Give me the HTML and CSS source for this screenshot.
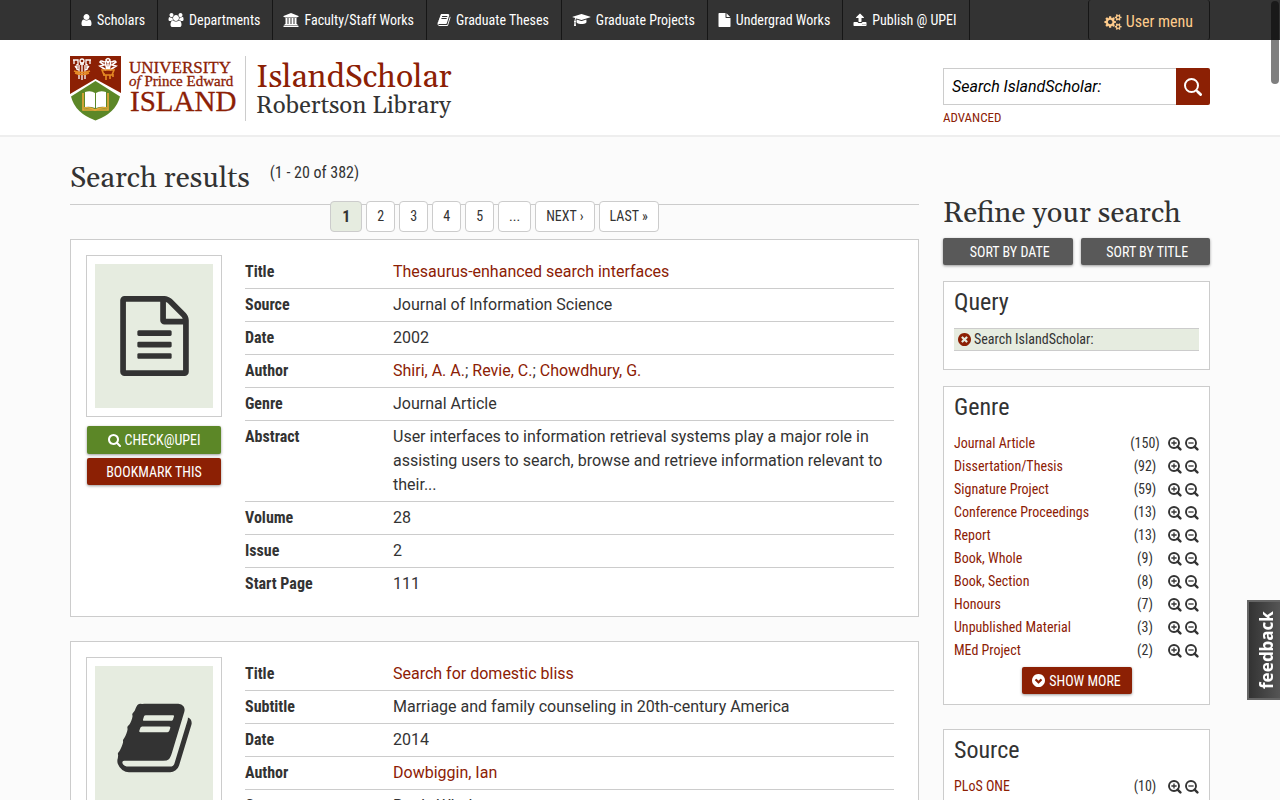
FILE: index.html
```html
<!DOCTYPE html>
<html lang="en">
<head>
<meta charset="utf-8">
<meta name="viewport" content="width=device-width, initial-scale=1">
<title>Search results | IslandScholar</title>
<link rel="stylesheet" href="styles.css">
</head>
<body>
<svg class="sprite" aria-hidden="true">
  <symbol id="i-user" viewBox="256 0 1280 1792"><path d="M1536 1399q0 109-62.5 187t-150.5 78h-854q-88 0-150.5-78t-62.5-187q0-85 8.5-160.5t31.5-152 58.5-131 94-89 134.5-34.5q131 128 313 128t313-128q76 0 134.5 34.5t94 89 58.5 131 31.5 152 8.5 160.5zm-256-887q0 159-112.5 271.5t-271.5 112.5-271.5-112.5-112.5-271.5 112.5-271.5 271.5-112.5 271.5 112.5 112.5 271.5z"/></symbol>
  <symbol id="i-users" viewBox="0 0 1920 1792"><path d="M593 896q-162 5-265 128h-134q-82 0-138-40.5t-56-118.5q0-353 124-353 6 0 43.5 21t97.5 42.5 119 21.5q67 0 133-23-5 37-5 66 0 159 93 287zm1071 637q0 120-73 189.5t-194 69.5h-874q-121 0-194-69.5t-73-189.5q0-53 3.5-103.5t14-109 26.5-108.5 43-97.5 62-81 85.5-53.5 111.5-20q10 0 43 21.5t73 48 107 48 135 21.5 135-21.5 107-48 73-48 43-21.5q61 0 111.5 20t85.5 53.5 62 81 43 97.5 26.5 108.5 14 109 3.5 103.5zm-1024-1277q0 106-75 181t-181 75-181-75-75-181 75-181 181-75 181 75 75 181zm704 384q0 159-112.5 271.5t-271.5 112.5-271.5-112.5-112.5-271.5 112.5-271.5 271.5-112.5 271.5 112.5 112.5 271.5zm576 225q0 78-56 118.5t-138 40.5h-134q-103-123-265-128 93-128 93-287 0-29-5-66 66 23 133 23 59 0 119-21.5t97.5-42.5 43.5-21q124 0 124 353zm-128-609q0 106-75 181t-181 75-181-75-75-181 75-181 181-75 181 75 75 181z"/></symbol>
  <symbol id="i-university" viewBox="0 0 1920 1792"><path d="M960 0l960 384v128h-128q0 26-20.5 45t-48.5 19h-1526q-28 0-48.5-19t-20.5-45h-128v-128zm-704 640h256v768h128v-768h256v768h128v-768h256v768h128v-768h256v768h59q28 0 48.5 19t20.5 45v64h-1664v-64q0-26 20.5-45t48.5-19h59v-768zm1595 960q28 0 48.5 19t20.5 45v128h-1920v-128q0-26 20.5-45t48.5-19h1782z"/></symbol>
  <symbol id="i-book" viewBox="64 0 1664 1792"><path d="M1703 478q40 57 18 129l-275 906q-19 64-76.5 107.5t-122.5 43.5h-923q-77 0-148.5-53.5t-99.5-131.5q-24-67-2-127 0-4 3-27t4-37q1-8-3-21.5t-3-19.5q2-11 8-21t16.5-23.5 16.5-23.5q23-38 45-91.5t30-91.5q3-10 .5-30t-.5-28q3-11 17-28t17-23q21-36 42-92t25-90q1-9-2.5-32t.5-28q4-13 22-30.5t22-22.5q19-26 42.5-84.5t27.5-96.5q1-8-3-25.5t-2-26.5q2-8 9-18t18-23 17-21q8-12 16.5-30.5t15-35 16-36 19.5-32 26.5-23.5 36-11.5 47.5 5.5l-1 3q38-9 51-9h761q74 0 114 56t18 130l-274 906q-36 119-71.5 153.5t-128.5 34.5h-869q-27 0-38 15-11 16-1 43 24 70 144 70h923q29 0 56-15.5t35-41.5l300-987q7-22 5-57 38 15 59 43zm-1064 2q-4 13 2 22.5t20 9.5h608q13 0 25.5-9.5t16.5-22.5l21-64q4-13-2-22.5t-20-9.5h-608q-13 0-25.5 9.5t-16.5 22.5zm-83 256q-4 13 2 22.5t20 9.5h608q13 0 25.5-9.5t16.5-22.5l21-64q4-13-2-22.5t-20-9.5h-608q-13 0-25.5 9.5t-16.5 22.5z"/></symbol>
  <symbol id="i-cap" viewBox="0 0 2304 1792"><path d="M1774 836l18 316q4 69-82 128t-235 93.5-323 34.5-323-34.5-235-93.5-82-128l18-316 574 181q22 7 48 7t48-7zm530-324q0 23-22 31l-1120 352q-4 1-10 1t-10-1l-652-206q-43 34-71 111.5t-34 178.5q63 36 63 109 0 69-58 107l58 433q2 14-8 25-9 11-24 11h-192q-15 0-24-11-10-11-8-25l58-433q-58-38-58-107 0-73 65-111 11-207 98-330l-333-104q-22-8-22-31t22-31l1120-352q4-1 10-1t10 1l1120 352q22 8 22 31z"/></symbol>
  <symbol id="i-file" viewBox="128 0 1536 1792"><path d="M1152 512v-472q22 14 36 28l408 408q14 14 28 36h-472zm-128 32q0 40 28 68t68 28h544v1056q0 40-28 68t-68 28h-1344q-40 0-68-28t-28-68v-1600q0-40 28-68t68-28h800v544z"/></symbol>
  <symbol id="i-upload" viewBox="64 0 1664 1792"><path d="M1344 1472q0-26-19-45t-45-19-45 19-19 45 19 45 45 19 45-19 19-45zm256 0q0-26-19-45t-45-19-45 19-19 45 19 45 45 19 45-19 19-45zm128-224v320q0 40-28 68t-68 28h-1472q-40 0-68-28t-28-68v-320q0-40 28-68t68-28h427q21 56 70.5 92t110.5 36h256q61 0 110.5-36t70.5-92h427q40 0 68 28t28 68zm-325-648q-17 40-59 40h-256v448q0 26-19 45t-45 19h-256q-26 0-45-19t-19-45v-448h-256q-42 0-59-40-17-39 14-69l448-448q18-19 45-19t45 19l448 448q31 30 14 69z"/></symbol>
  <symbol id="i-cogs" viewBox="0 0 1920 1792"><path d="M896 896q0-106-75-181t-181-75-181 75-75 181 75 181 181 75 181-75 75-181zm768 512q0-52-38-90t-90-38-90 38-38 90q0 53 37.5 90.5t90.5 37.5 90.5-37.5 37.5-90.5zm0-1024q0-52-38-90t-90-38-90 38-38 90q0 53 37.5 90.5t90.5 37.5 90.5-37.5 37.5-90.5zm-384 421v185q0 10-7 19.5t-16 10.5l-155 24q-11 35-32 76 34 48 90 115 7 11 7 20 0 12-7 19-23 30-82.5 89.5t-78.5 59.5q-11 0-21-7l-115-90q-37 19-77 31-11 108-23 155-7 24-30 24h-186q-11 0-20-7.5t-10-17.5l-23-153q-34-10-75-31l-118 89q-7 7-20 7-11 0-21-8-144-133-144-160 0-9 7-19 10-14 41-53t47-61q-23-44-35-82l-152-24q-10-1-17-9.5t-7-19.5v-185q0-10 7-19.5t16-10.5l155-24q11-35 32-76-34-48-90-115-7-11-7-20 0-12 7-20 22-30 82-89t79-59q11 0 21 7l115 90q34-18 77-32 11-108 23-154 7-24 30-24h186q11 0 20 7.5t10 17.5l23 153q34 10 75 31l118-89q8-7 20-7 11 0 21 8 144 133 144 160 0 9-7 19-12 16-42 54t-45 60q23 48 34 82l152 23q10 2 17 10.5t7 19.5zm640 533v140q0 16-149 31-12 27-30 52 51 113 51 138 0 4-4 7-122 71-124 71-8 0-46-47t-52-68q-20 2-30 2t-30-2q-14 21-52 68t-46 47q-2 0-124-71-4-3-4-7 0-25 51-138-18-25-30-52-149-15-149-31v-140q0-16 149-31 13-29 30-52-51-113-51-138 0-4 4-7 4-2 35-20t59-34 30-16q8 0 46 46.5t52 67.5q20-2 30-2t30 2q51-71 92-112l6-2q4 0 124 70 4 3 4 7 0 25-51 138 17 23 30 52 149 15 149 31zm0-1024v140q0 16-149 31-12 27-30 52 51 113 51 138 0 4-4 7-122 71-124 71-8 0-46-47t-52-68q-20 2-30 2t-30-2q-14 21-52 68t-46 47q-2 0-124-71-4-3-4-7 0-25 51-138-18-25-30-52-149-15-149-31v-140q0-16 149-31 13-29 30-52-51-113-51-138 0-4 4-7 4-2 35-20t59-34 30-16q8 0 46 46.5t52 67.5q20-2 30-2t30 2q51-71 92-112l6-2q4 0 124 70 4 3 4 7 0 25-51 138 17 23 30 52 149 15 149 31z"/></symbol>
  <symbol id="i-search" viewBox="64 128 1664 1664"><path d="M1216 832q0-185-131.5-316.5t-316.5-131.5-316.5 131.5-131.5 316.5 131.5 316.5 316.5 131.5 316.5-131.5 131.5-316.5zm512 832q0 52-38 90t-90 38q-54 0-90-38l-343-342q-179 124-399 124-143 0-273.5-55.5t-225-150-150-225-55.5-273.5 55.5-273.5 150-225 225-150 273.5-55.5 273.5 55.5 225 150 150 225 55.5 273.5q0 220-124 399l343 343q37 37 37 90z"/></symbol>
  <symbol id="i-glass" viewBox="0 0 18 18"><g fill="none" stroke="currentColor" stroke-linecap="round"><circle cx="7.500" cy="7.500" r="6.500" stroke-width="2"/><path d="M12.500 12.500l.8.800" stroke-width="2"/><path d="M14 14l2.600 2.600" stroke-width="2.800"/></g></symbol>
  <symbol id="i-plus" viewBox="0 0 14 14"><g fill="none" stroke="currentColor"><circle cx="6" cy="6" r="5" stroke-width="1.9"/><path d="M9.6 9.6l2.8 2.8" stroke-width="2.4" stroke-linecap="round"/><path d="M3.4 6h5.2M6 3.4v5.2" stroke-width="1.3"/></g></symbol>
  <symbol id="i-minus" viewBox="0 0 14 14"><g fill="none" stroke="currentColor"><circle cx="6" cy="6" r="5" stroke-width="1.9"/><path d="M9.6 9.6l2.8 2.8" stroke-width="2.4" stroke-linecap="round"/><path d="M3.4 6h5.2" stroke-width="1.3"/></g></symbol>
  <symbol id="i-times" viewBox="128 128 1536 1536"><path d="M1277 1122q0-26-19-45l-181-181 181-181q19-19 19-45 0-27-19-46l-90-90q-19-19-46-19-26 0-45 19l-181 181-181-181q-19-19-45-19-27 0-46 19l-90 90q-19 19-19 46 0 26 19 45l181 181-181 181q-19 19-19 45 0 27 19 46l90 90q19 19 46 19 26 0 45-19l181-181 181 181q19 19 45 19 27 0 46-19l90-90q19-19 19-46zm387-226q0 209-103 385.5t-279.5 279.5-385.5 103-385.5-103-279.5-279.5-103-385.5 103-385.5 279.5-279.5 385.5-103 385.5 103 279.5 279.5 103 385.5z"/></symbol>
  <symbol id="i-down" viewBox="128 128 1536 1536"><path d="M941 1259l358-358q19-19 19-45t-19-45l-102-102q-19-19-45-19t-45 19l-211 211-211-211q-19-19-45-19t-45 19l-102 102q-19 19-19 45t19 45l358 358q19 19 45 19t45-19zm723-363q0 209-103 385.5t-279.5 279.5-385.5 103-385.5-103-279.5-279.5-103-385.5 103-385.5 279.5-279.5 385.5-103 385.5 103 279.5 279.5 103 385.5z"/></symbol>
  <symbol id="i-doc" viewBox="128 0 1536 1792"><path d="M1596 380q28 28 48 76t20 88v1152q0 40-28 68t-68 28h-1344q-40 0-68-28t-28-68v-1600q0-40 28-68t68-28h896q40 0 88 20t76 48zm-444-244v376h376q-10-29-22-41l-313-313q-12-12-41-22zm384 1528v-1024h-416q-40 0-68-28t-28-68v-416h-768v1536h1280zm-1024-864q0-14 9-23t23-9h704q14 0 23 9t9 23v64q0 14-9 23t-23 9h-704q-14 0-23-9t-9-23v-64zm736 224q14 0 23 9t9 23v64q0 14-9 23t-23 9h-704q-14 0-23-9t-9-23v-64q0-14 9-23t23-9h704zm0 256q14 0 23 9t9 23v64q0 14-9 23t-23 9h-704q-14 0-23-9t-9-23v-64q0-14 9-23t23-9h704z"/></symbol>
</svg>

<nav class="topbar">
  <div class="container topbar-row">
    <ul class="menu">
      <li><a href="#"><svg class="w11"><use href="#i-user"/></svg>Scholars</a></li>
      <li><a href="#"><svg class="w16"><use href="#i-users"/></svg>Departments</a></li>
      <li><a href="#"><svg class="w16"><use href="#i-university"/></svg>Faculty/Staff Works</a></li>
      <li><a href="#"><svg class="w14"><use href="#i-book"/></svg>Graduate Theses</a></li>
      <li><a href="#"><svg class="w19"><use href="#i-cap"/></svg>Graduate Projects</a></li>
      <li><a href="#"><svg class="w13"><use href="#i-file"/></svg>Undergrad Works</a></li>
      <li><a href="#"><svg class="w14"><use href="#i-upload"/></svg>Publish @ UPEI</a></li>
    </ul>
    <button class="user-menu" type="button"><svg><use href="#i-cogs"/></svg>User menu</button>
  </div>
</nav>

<header class="masthead">
  <div class="container masthead-row">
    <a class="brand" href="#">
      <svg class="logo" viewBox="0 0 166 65" role="img" aria-label="University of Prince Edward Island">
        <path d="M0 0h51v37L25.500 23 0 38z" fill="#8c2004"/>
        <path d="M1 40.500L25.500 25 50 40.500Q46 57 25.500 64.500 5 57 1 40.500z" fill="#5c8727"/>
        <g fill="none" stroke="#fff" stroke-width="1.300">
          <circle cx="12" cy="5" r="2"/><path d="M3 4h5v5M4 4v4M21 4h-5v5M20 4v4M7 8v6M17 8v6M10 8h4M12 7v17M9 9v14M15 9v14M5 10l3 4M19 10l-3 4"/>
          <path d="M38 14V5M36 4q2-3 4 0l-2 3zM34 6q-3-2-4 0l4 3-4 1 6 4M42 6q3-2 4 0l-4 3 4 1-6 4M35 5l2 9M41 5l-2 9" stroke-width="1.600"/>
        </g>
        <path d="M4 15q8 3 16 0M5 17q7 3 14 0M32 14h12l-2 5h-8zM36 19v5M40 19v4M34 17v3M43 18v3" fill="none" stroke="#e58a24" stroke-width="1.600"/>
        <path d="M13 37v17h25V37" fill="none" stroke="#e9a93a" stroke-width="1.600"/>
        <path d="M15 36q6-2 10 1v15q-5-2-10-1zM36 36q-6-2-10 1v15q5-2 10-1z" fill="#fff"/>
        <path d="M14 52q6-1 11 2 6-3 12-2" fill="none" stroke="#e9a93a" stroke-width="1.500"/>
        <g class="logo-text">
          <text x="59" y="17" font-size="17">UNIVERSITY</text>
          <text x="59" y="30" font-size="15"><tspan font-style="italic">of</tspan> Prince Edward</text>
          <text x="60" y="55" font-size="29">ISLAND</text>
        </g>
      </svg>
      <span class="site">
        <span class="site-name">IslandScholar</span>
        <span class="site-sub">Robertson Library</span>
      </span>
    </a>
    <form class="search">
      <div class="search-row">
        <input type="text" aria-label="Search" placeholder="Search IslandScholar:">
        <button type="button" aria-label="Search"><svg><use href="#i-glass"/></svg></button>
      </div>
      <a class="advanced" href="#">ADVANCED</a>
    </form>
  </div>
</header>

<div class="container page">
  <main>
    <div class="heading">
      <h1>Search results</h1>
      <span>(1 - 20 of 382)</span>
    </div>
    <ul class="pager">
      <li class="current">1</li>
      <li><a href="#">2</a></li>
      <li><a href="#">3</a></li>
      <li><a href="#">4</a></li>
      <li><a href="#">5</a></li>
      <li>...</li>
      <li><a href="#">NEXT ›</a></li>
      <li><a href="#">LAST »</a></li>
    </ul>

    <article class="result">
      <div class="side">
        <a class="thumb" href="#" aria-label="Journal Article"><span><svg class="doc"><use href="#i-doc"/></svg></span></a>
        <button class="btn green" type="button"><svg><use href="#i-search"/></svg>CHECK@UPEI</button>
        <button class="btn red" type="button">BOOKMARK THIS</button>
      </div>
      <dl>
        <div><dt>Title</dt><dd><a href="#">Thesaurus-enhanced search interfaces</a></dd></div>
        <div><dt>Source</dt><dd>Journal of Information Science</dd></div>
        <div><dt>Date</dt><dd>2002</dd></div>
        <div><dt>Author</dt><dd><a href="#">Shiri, A. A.</a>; <a href="#">Revie, C.</a>; <a href="#">Chowdhury, G.</a></dd></div>
        <div><dt>Genre</dt><dd>Journal Article</dd></div>
        <div><dt>Abstract</dt><dd>User interfaces to information retrieval systems play a major role in assisting users to search, browse and retrieve information relevant to their...</dd></div>
        <div><dt>Volume</dt><dd>28</dd></div>
        <div><dt>Issue</dt><dd>2</dd></div>
        <div><dt>Start Page</dt><dd>111</dd></div>
      </dl>
    </article>

    <article class="result">
      <div class="side">
        <a class="thumb" href="#" aria-label="Book, Whole"><span><svg class="book"><use href="#i-book"/></svg></span></a>
      </div>
      <dl>
        <div><dt>Title</dt><dd><a href="#">Search for domestic bliss</a></dd></div>
        <div><dt>Subtitle</dt><dd>Marriage and family counseling in 20th-century America</dd></div>
        <div><dt>Date</dt><dd>2014</dd></div>
        <div><dt>Author</dt><dd><a href="#">Dowbiggin, Ian</a></dd></div>
        <div><dt>Genre</dt><dd>Book, Whole</dd></div>
      </dl>
    </article>
  </main>

  <aside>
    <h2>Refine your search</h2>
    <div class="sorts">
      <button class="btn grey" type="button">SORT BY DATE</button>
      <button class="btn grey" type="button">SORT BY TITLE</button>
    </div>
    <section class="box query">
      <h3>Query</h3>
      <p><a href="#" aria-label="Remove"><svg><use href="#i-times"/></svg></a>Search IslandScholar:</p>
    </section>
    <section class="box">
      <h3>Genre</h3>
      <ul class="facets">
        <li><a href="#">Journal Article</a><span>(150)</span><button type="button" aria-label="Include"><svg><use href="#i-plus"/></svg></button><button type="button" aria-label="Exclude"><svg><use href="#i-minus"/></svg></button></li>
        <li><a href="#">Dissertation/Thesis</a><span>(92)</span><button type="button" aria-label="Include"><svg><use href="#i-plus"/></svg></button><button type="button" aria-label="Exclude"><svg><use href="#i-minus"/></svg></button></li>
        <li><a href="#">Signature Project</a><span>(59)</span><button type="button" aria-label="Include"><svg><use href="#i-plus"/></svg></button><button type="button" aria-label="Exclude"><svg><use href="#i-minus"/></svg></button></li>
        <li><a href="#">Conference Proceedings</a><span>(13)</span><button type="button" aria-label="Include"><svg><use href="#i-plus"/></svg></button><button type="button" aria-label="Exclude"><svg><use href="#i-minus"/></svg></button></li>
        <li><a href="#">Report</a><span>(13)</span><button type="button" aria-label="Include"><svg><use href="#i-plus"/></svg></button><button type="button" aria-label="Exclude"><svg><use href="#i-minus"/></svg></button></li>
        <li><a href="#">Book, Whole</a><span>(9)</span><button type="button" aria-label="Include"><svg><use href="#i-plus"/></svg></button><button type="button" aria-label="Exclude"><svg><use href="#i-minus"/></svg></button></li>
        <li><a href="#">Book, Section</a><span>(8)</span><button type="button" aria-label="Include"><svg><use href="#i-plus"/></svg></button><button type="button" aria-label="Exclude"><svg><use href="#i-minus"/></svg></button></li>
        <li><a href="#">Honours</a><span>(7)</span><button type="button" aria-label="Include"><svg><use href="#i-plus"/></svg></button><button type="button" aria-label="Exclude"><svg><use href="#i-minus"/></svg></button></li>
        <li><a href="#">Unpublished Material</a><span>(3)</span><button type="button" aria-label="Include"><svg><use href="#i-plus"/></svg></button><button type="button" aria-label="Exclude"><svg><use href="#i-minus"/></svg></button></li>
        <li><a href="#">MEd Project</a><span>(2)</span><button type="button" aria-label="Include"><svg><use href="#i-plus"/></svg></button><button type="button" aria-label="Exclude"><svg><use href="#i-minus"/></svg></button></li>
      </ul>
      <button class="btn red more" type="button"><svg><use href="#i-down"/></svg>SHOW MORE</button>
    </section>
    <section class="box">
      <h3>Source</h3>
      <ul class="facets">
        <li><a href="#">PLoS ONE</a><span>(10)</span><button type="button" aria-label="Include"><svg><use href="#i-plus"/></svg></button><button type="button" aria-label="Exclude"><svg><use href="#i-minus"/></svg></button></li>
      </ul>
    </section>
  </aside>
</div>

<button class="feedback" type="button">feedback</button>
<div class="scroll-thumb"></div>
</body>
</html>
```
FILE: styles.css
```css
* { box-sizing: border-box; }
html { scrollbar-width: none; }
body {
  margin: 0;
  background: #fbfbfb;
  color: #333;
  font: 16px/24px Roboto, sans-serif;
}
a { color: #8c2004; text-decoration: none; }
ul { list-style: none; margin: 0; padding: 0; }
h1, h2, h3, p, dl, dd { margin: 0; }
svg { fill: currentColor; flex: none; }
button { font: inherit; color: inherit; border: 0; padding: 0; background: none; cursor: pointer; }
.sprite { position: absolute; width: 0; height: 0; }
.container { max-width: 1140px; margin: 0 auto; }

.topbar { background: #333; }
.topbar-row { display: flex; justify-content: space-between; height: 40px; }
.menu { display: flex; border-left: 1px solid #161616; }
.menu li { border-right: 1px solid #161616; }
.menu a {
  display: flex;
  align-items: center;
  gap: 5px;
  height: 40px;
  padding: 0 12px 0 10px;
  color: #fff;
  font: 14px/20px "Roboto Condensed", Roboto, sans-serif;
  white-space: nowrap;
}
.menu svg { height: 14px; }
.w11 { width: 11px; }
.w13 { width: 13px; }
.w14 { width: 14px; }
.w16 { width: 16px; }
.w19 { width: 19px; }
.user-menu {
  display: flex;
  align-items: center;
  gap: 4px;
  padding: 4px 16px 0 15px;
  border: solid #161616;
  border-width: 0 1px;
  border-radius: 3px;
  color: #ffcc8c;
  font: 16px/20px "Roboto Condensed", Roboto, sans-serif;
}
.user-menu svg { width: 18px; height: 16px; }

.masthead { background: #fff; border-bottom: 2px solid #eee; }
.masthead-row { display: flex; justify-content: space-between; align-items: flex-start; padding: 16px 0 4px; }
.brand { display: flex; }
.logo { width: 166px; height: 65px; }
.logo-text { fill: #8c2004; stroke: #8c2004; stroke-width: .3; font-family: "Liberation Serif", serif; }
.site {
  display: flex;
  flex-direction: column;
  margin-left: 9px;
  padding: 6px 0 0 10px;
  border-left: 1px solid #ccc;
  font-family: Georgia, Gelasio, "Liberation Serif", serif;
}
.site-name { font-size: 32px; line-height: 32px; }
.site-sub { font-size: 24px; line-height: 24px; color: #333; }
.search { width: 267px; padding-top: 12px; }
.search-row { display: flex; }
.search input {
  flex: 1;
  min-width: 0;
  height: 37px;
  padding: 0 8px;
  border: 1px solid #ccc;
  border-right: 0;
  background: #fff;
  font: italic 16px/24px Roboto, sans-serif;
}
.search input::placeholder { color: #000; opacity: 1; }
.search button {
  display: grid;
  place-items: center;
  width: 34px;
  height: 37px;
  border-radius: 0 2px 2px 0;
  background: #8c2004;
  color: #fff;
}
.search button svg { width: 18px; height: 18px; }
.advanced { display: block; font: 13px/26px "Roboto Condensed", Roboto, sans-serif; }

.page { display: flex; gap: 24px; }
main { flex: 1; min-width: 0; }
aside { width: 267px; padding-top: 61px; }
h1, h2 { font: 400 29px/36px Georgia, Gelasio, "Liberation Serif", serif; }
.heading {
  display: flex;
  gap: 20px;
  padding: 24px 0 7px;
  border-bottom: 1px solid #ccc;
  font-family: "Roboto Condensed", Roboto, sans-serif;
}
.pager {
  display: flex;
  justify-content: center;
  gap: 4px;
  margin-top: -4px;
  font: 14px/29px "Roboto Condensed", Roboto, sans-serif;
}
.pager li {
  padding: 0 10px;
  border: 1px solid #ccc;
  border-radius: 4px;
  background: #fff;
}
.pager a { color: #333; }
.pager .current { padding: 0 11px; background: #e6ece0; font-size: 16px; font-weight: 700; }

.result {
  display: flex;
  gap: 23px;
  margin: 7px 0 24px;
  padding: 15px 24px 15px 15px;
  border: 1px solid #ccc;
  background: #fff;
}
.result + .result { margin-top: 0; }
.side { width: 136px; }
.thumb { display: block; padding: 8px; margin-bottom: 9px; border: 1px solid #ccc; color: #333; }
.thumb span { display: grid; place-items: center; height: 144px; background: #e6ece0; }
.doc { width: 69px; height: 80px; }
.book { width: 75px; height: 80px; }
.btn {
  display: flex;
  align-items: center;
  justify-content: center;
  gap: 4px;
  height: 27px;
  border-radius: 2px;
  box-shadow: 0 1px 3px rgba(0, 0, 0, .4);
  color: #fff;
  font: 14px/20px "Roboto Condensed", Roboto, sans-serif;
}
.btn svg { width: 13px; height: 13px; }
.side .btn { width: 134px; margin: 0 1px 4px; }
.side .green { height: 28px; background: #5c8727; }
.red { background: #8c2004; }
.grey { background: #595959; }
dl { flex: 1; min-width: 0; padding: 1px 0; }
dl div { display: flex; padding: 4px 0; border-bottom: 1px solid #ccc; }
dl div:last-child { border-bottom: 0; }
dt { width: 148px; flex: none; font-family: "Roboto Condensed", Roboto, sans-serif; font-weight: 700; }

h2 { margin-bottom: 8px; line-height: 32px; }
.sorts { display: grid; grid-template-columns: 1fr 1fr; gap: 8px; margin-bottom: 16px; }
.sorts .btn { padding-left: 4px; }
.box {
  margin-bottom: 24px;
  padding: 8px 10px 10px;
  border: 1px solid #ccc;
  background: #fff;
  font: 14px/23px "Roboto Condensed", Roboto, sans-serif;
}
.query { margin-bottom: 16px; padding-bottom: 18px; }
h3 { margin-bottom: 13px; font-size: 24px; font-weight: 400; line-height: 24px; }
.query h3 { margin-bottom: 14px; }
.query p { display: flex; align-items: center; gap: 3px; padding: 0 4px; border: solid #ccc; border-width: 1px 0; background: #e6ece0; line-height: 21px; }
.query svg { display: block; width: 13px; height: 13px; }
.facets li { display: grid; grid-template-columns: 1fr 40px 14px 14px; column-gap: 3px; align-items: center; }
.facets span { text-align: center; }
.facets button { display: block; height: 14px; }
.facets svg { display: block; width: 14px; height: 14px; }
.more { width: 110px; margin: 5px auto 0; }

.feedback {
  position: fixed;
  right: 0;
  top: 600px;
  width: 33px;
  height: 100px;
  padding-right: 6px;
  border: 2px solid #666;
  border-left: 0;
  background: linear-gradient(270deg, #333, #555);
  color: #fff;
  font: 700 17px/24px "Noto Sans", sans-serif;
  writing-mode: vertical-rl;
  transform: rotate(180deg);
}
.scroll-thumb {
  position: fixed;
  top: 1px;
  right: 1px;
  width: 8px;
  height: 83px;
  border-radius: 4px;
  background: rgba(0, 0, 0, .5);
}
```
